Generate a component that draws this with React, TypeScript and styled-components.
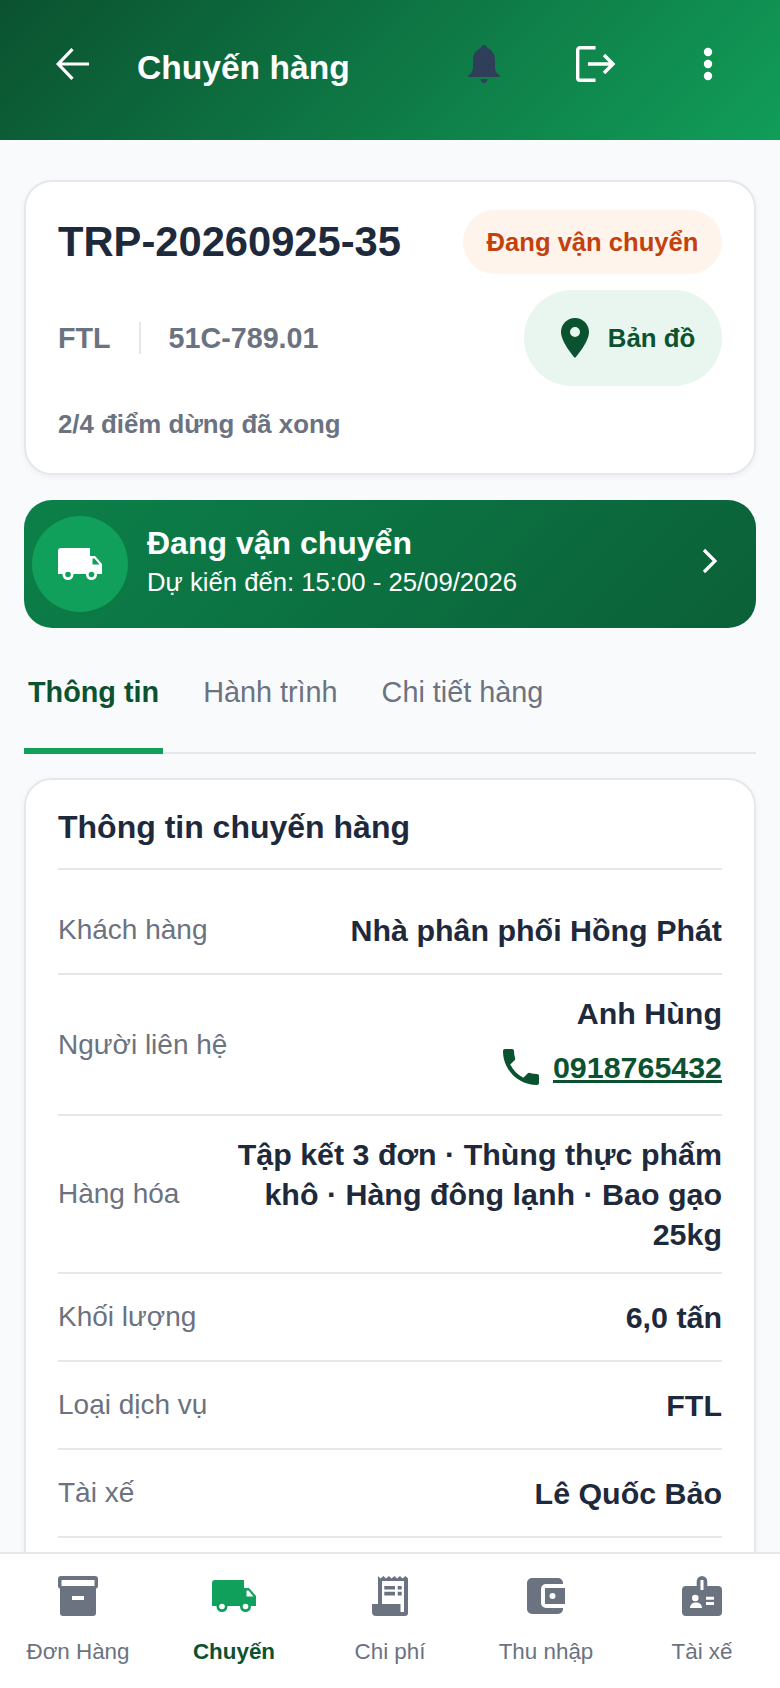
import styled, { createGlobalStyle } from 'styled-components';
import { MdLocationOn, MdPhone } from 'react-icons/md';

const GlobalStyle = createGlobalStyle`
  html, body {
    margin: 0;
    padding: 0;
    background: #f8fafc;
  }
  * {
    box-sizing: border-box;
  }
`;

const Screen = styled.div`
  width: 780px;
  height: 1688px;
  display: flex;
  flex-direction: column;
  overflow: hidden;
  background: #f8fafc;
  font-family: "Liberation Sans", Arial, sans-serif;
`;

const Header = styled.header`
  height: 140px;
  flex-shrink: 0;
  display: flex;
  align-items: center;
  padding: 0 16px 12px 56px;
  background: linear-gradient(135deg, #0b5230 0%, #119d59 100%);
`;

const Title = styled.h1`
  flex: 1;
  margin: 7px 0 0 48px;
  font-size: 33.6px;
  font-weight: 700;
  color: #fff;
`;

const HeaderActions = styled.div`
  display: flex;
  align-items: center;
`;

const HeaderButton = styled.div`
  width: 112px;
  display: flex;
  align-items: center;
  justify-content: center;
`;

const Body = styled.main`
  flex: 1;
  min-height: 0;
  overflow: hidden;
  padding: 40px 24px 0;
`;

const Card = styled.section`
  background: #fff;
  border: 2px solid #e5e7eb;
  border-radius: 28px;
  box-shadow: 0 2px 6px rgba(0, 0, 0, 0.05);
`;

const SummaryCard = styled(Card)`
  height: 295px;
  padding: 28px 32px 0;
`;

const SummaryTop = styled.div`
  display: flex;
  justify-content: space-between;
  align-items: center;
`;

const TripCode = styled.div`
  font-size: 41.7px;
  font-weight: 700;
  color: #1e293b;
`;

const StatusPill = styled.div`
  height: 64px;
  width: 259px;
  display: flex;
  align-items: center;
  justify-content: center;
  border-radius: 32px;
  background: #fff4ec;
  color: #c2410c;
  font-size: 25.6px;
  font-weight: 700;
`;

const SummaryMiddle = styled.div`
  margin-top: 16px;
  display: flex;
  justify-content: space-between;
  align-items: center;
`;

const Meta = styled.div`
  display: flex;
  align-items: center;
  font-size: 28.7px;
  font-weight: 700;
  color: #6b7280;
`;

const MetaDivider = styled.span`
  width: 2px;
  height: 32px;
  margin: 0 28px;
  background: #e5e7eb;
`;

const MapButton = styled.button`
  width: 198px;
  height: 96px;
  padding: 0;
  display: flex;
  align-items: center;
  justify-content: center;
  gap: 9px;
  border: 0;
  border-radius: 48px;
  background: #e8f6ef;
  color: #0b5230;
  font-family: inherit;
  font-size: 25.8px;
  font-weight: 700;
`;

const Progress = styled.div`
  margin-top: 24px;
  font-size: 25.8px;
  font-weight: 700;
  color: #6b7280;
`;

const Banner = styled.div`
  margin-top: 25px;
  height: 128px;
  display: flex;
  align-items: center;
  padding: 0 39px 0 8px;
  border-radius: 28px;
  background: linear-gradient(135deg, #0c8049 0%, #0b6038 100%);
  color: #fff;
`;

const BannerIcon = styled.div`
  width: 96px;
  height: 96px;
  display: flex;
  align-items: center;
  justify-content: center;
  border-radius: 50%;
  background: #11a05b;
  flex-shrink: 0;
`;

const BannerText = styled.div`
  flex: 1;
  margin: -3px 0 0 19px;
`;

const BannerTitle = styled.div`
  font-size: 32px;
  font-weight: 700;
  line-height: 40px;
`;

const BannerSub = styled.div`
  font-size: 25.7px;
  line-height: 39px;
`;

const BannerChevron = styled.div`
  display: flex;
  margin-bottom: 7px;
`;

const Tabs = styled.nav`
  margin-top: 24px;
  height: 102px;
  display: flex;
  gap: 36px;
  border-bottom: 2px solid #e5e7eb;
`;

const Tab = styled.div<{ $active?: boolean }>`
  height: 102px;
  padding: 24px 4px 0;
  font-size: 28.8px;
  font-weight: ${(p) => (p.$active ? 700 : 400)};
  color: ${(p) => (p.$active ? '#0b5230' : '#6b7280')};
  border-bottom: ${(p) => (p.$active ? '6px solid #11a05b' : '0')};
`;

const InfoCard = styled(Card)`
  margin-top: 24px;
  padding: 0 32px;
`;

const InfoTitle = styled.h2`
  margin: 0 0 17px;
  height: 90px;
  padding-top: 6px;
  display: flex;
  align-items: center;
  font-size: 32px;
  font-weight: 700;
  color: #1e293b;
  border-bottom: 2px solid #e5e7eb;
`;

const Row = styled.div`
  min-height: 88px;
  display: flex;
  justify-content: space-between;
  align-items: center;
  gap: 40px;
  padding: 18px 0;
  border-bottom: 2px solid #e5e7eb;
`;

const Label = styled.div`
  flex-shrink: 0;
  font-size: 28px;
  color: #6b7280;
`;

const Value = styled.div`
  text-align: right;
  font-size: 30.4px;
  line-height: 40px;
  font-weight: 700;
  color: #1e293b;
`;

const Phone = styled.div`
  margin: 10px 0 5px;
  display: flex;
  justify-content: flex-end;
  align-items: center;
  gap: 8px;
  color: #0b5230;
  text-decoration: underline;
`;

// the card runs on under the bottom bar
const CardTail = styled.div`
  height: 60px;
`;

const BottomNav = styled.nav`
  height: 136px;
  flex-shrink: 0;
  display: flex;
  justify-content: space-around;
  padding-top: 22px;
  background: #fff;
  border-top: 2px solid #e5e7eb;
`;

const NavItem = styled.div<{ $active?: boolean }>`
  width: 156px;
  display: flex;
  flex-direction: column;
  align-items: center;
  gap: 23px;
  font-size: 22.4px;
  line-height: 26px;
  font-weight: ${(p) => (p.$active ? 700 : 400)};
  color: ${(p) => (p.$active ? '#0b5230' : '#6b7280')};
`;

const NavIcon = styled.div`
  height: 40px;
  display: flex;
  align-items: center;
  justify-content: center;
`;

const BackIcon = () => (
  <svg width="33" height="32" viewBox="0 0 33 32" fill="none" stroke="#fff" strokeWidth="3.2" style={{ flexShrink: 0 }}>
    <path d="M33 16H3M16.5 1.2 2.2 16l14.3 14.8" />
  </svg>
);

const BellIcon = () => (
  <svg width="32" height="38" viewBox="0 0 32 38" fill="#2f3f5a">
    <path d="M16 0c1.6 0 2.7 1.2 3.2 3C24.400 5 27 9.500 27 15v8c0 3 2 5.500 5 7.500V32H0v-1.500c3-2 5-4.500 5-7.500v-8C5 9.500 7.600 5 12.800 3 13.300 1.200 14.400 0 16 0z" />
    <path d="M12.500 34h7c-.4 2.400-1.800 4-3.500 4s-3.100-1.600-3.500-4z" />
  </svg>
);

const LogoutIcon = () => (
  <svg width="40" height="36" viewBox="0 0 40 36" fill="none" stroke="#fff" strokeWidth="3.4">
    <path d="M19.500 1.700H4a2.300 2.300 0 0 0-2.300 2.300v28A2.300 2.300 0 0 0 4 34.300h15.500M12 18h25M28 9l9 9-9 9" />
  </svg>
);

const DotsIcon = () => (
  <svg width="10" height="34" viewBox="0 0 10 34" fill="#fff">
    <circle cx="5" cy="5" r="4.200" />
    <circle cx="5" cy="17" r="4.200" />
    <circle cx="5" cy="29" r="4.200" />
  </svg>
);

const TruckIcon = ({ color, hole }: { color: string; hole: string }) => (
  <svg width="44" height="32" viewBox="0 0 44 32">
    <path
      fill={color}
      fillRule="evenodd"
      d="M3 0h29v8h5l7 8v10H0V3a3 3 0 0 1 3-3zM34.500 10.500v6h7l-5-6z"
    />
    <circle cx="10" cy="26.500" r="5.500" fill={color} />
    <circle cx="10" cy="26.500" r="2.800" fill={hole} />
    <circle cx="33.500" cy="26.500" r="5.500" fill={color} />
    <circle cx="33.500" cy="26.500" r="2.800" fill={hole} />
  </svg>
);

const ChevronIcon = () => (
  <svg width="15" height="26" viewBox="0 0 15 26" fill="none" stroke="#fff" strokeWidth="3.200">
    <path d="M2 2l11 11L2 24" />
  </svg>
);

const ArchiveIcon = () => (
  <svg width="40" height="40" viewBox="0 0 40 40" fill="#6b7280">
    <path
      fillRule="evenodd"
      d="M3 0h34a3 3 0 0 1 3 3v7a3 3 0 0 1-2 2.800V37a3 3 0 0 1-3 3H5a3 3 0 0 1-3-3V12.800A3 3 0 0 1 0 10V3a3 3 0 0 1 3-3zm.500 4v6h33V4zM14 20v4h12v-4z"
    />
  </svg>
);

const ReceiptIcon = () => (
  <svg width="36" height="40" viewBox="0 0 36 40" fill="#6b7280">
    <path
      fillRule="evenodd"
      d="M6 0l2.500 2.500L11.500 0 14 2.500 17 0l2.500 2.500L22.500 0 25 2.500 28 0l2.500 2.500L33.500 0 36 2.500V37a3 3 0 0 1-3 3H4a4 4 0 0 1-4-4v-8h6zm4 5v23h18.500v8H32V5z"
    />
    <path d="M12.300 10H23v3.400H12.300zM12.300 15.800H23v3.800H12.300zM25.700 10h4v3.400h-4zM25.700 15.800h4v3.800h-4z" />
  </svg>
);

const WalletIcon = () => (
  <svg width="38" height="36" viewBox="0 0 38 36" fill="#6b7280">
    <path d="M5 0h26a5 5 0 0 1 5 5v1H19a5 5 0 0 0-5 5v14a5 5 0 0 0 5 5h17v1a5 5 0 0 1-5 5H5a5 5 0 0 1-5-5V5a5 5 0 0 1 5-5z" />
    <path fillRule="evenodd" d="M18 10h20v16H18zm7.500 5a3 3 0 1 0 0 6 3 3 0 0 0 0-6z" />
  </svg>
);

const BadgeIcon = () => (
  <svg width="40" height="40" viewBox="0 0 40 40" fill="#6b7280">
    <path
      fillRule="evenodd"
      d="M20 0a5.300 5.300 0 0 1 5.300 5.300V10H36a4 4 0 0 1 4 4v22a4 4 0 0 1-4 4H4a4 4 0 0 1-4-4V14a4 4 0 0 1 4-4h10.700V5.300A5.300 5.300 0 0 1 20 0zm-1.500 4v10h3V4zm-5.200 14.700a3.300 3.300 0 1 0 0 6.600 3.300 3.300 0 0 0 0-6.600zM8 32h12c0-3.500-2.500-5.500-6-5.500S8 28.500 8 32zm16-11.300v3h8v-3zm0 5.300v3h8v-3z"
    />
  </svg>
);

const lowerRows = [
  { label: 'Hàng hóa', value: 'Tập kết 3 đơn · Thùng thực phẩm khô · Hàng đông lạnh · Bao gạo 25kg' },
  { label: 'Khối lượng', value: '6,0 tấn' },
  { label: 'Loại dịch vụ', value: 'FTL' },
  { label: 'Tài xế', value: 'Lê Quốc Bảo' },
];

export default function App() {
  return (
    <Screen>
      <GlobalStyle />
      <Header>
        <BackIcon />
        <Title>Chuyến hàng</Title>
        <HeaderActions>
          <HeaderButton>
            <BellIcon />
          </HeaderButton>
          <HeaderButton>
            <LogoutIcon />
          </HeaderButton>
          <HeaderButton>
            <DotsIcon />
          </HeaderButton>
        </HeaderActions>
      </Header>
      <Body>
        <SummaryCard>
          <SummaryTop>
            <TripCode>TRP-20260925-35</TripCode>
            <StatusPill>Đang vận chuyển</StatusPill>
          </SummaryTop>
          <SummaryMiddle>
            <Meta>
              FTL
              <MetaDivider />
              51C-789.01
            </Meta>
            <MapButton>
              <MdLocationOn size={48} />
              Bản đồ
            </MapButton>
          </SummaryMiddle>
          <Progress>2/4 điểm dừng đã xong</Progress>
        </SummaryCard>

        <Banner>
          <BannerIcon>
            <TruckIcon color="#fff" hole="#11a05b" />
          </BannerIcon>
          <BannerText>
            <BannerTitle>Đang vận chuyển</BannerTitle>
            <BannerSub>Dự kiến đến: 15:00 - 25/09/2026</BannerSub>
          </BannerText>
          <BannerChevron>
            <ChevronIcon />
          </BannerChevron>
        </Banner>

        <Tabs>
          <Tab $active>Thông tin</Tab>
          <Tab>Hành trình</Tab>
          <Tab>Chi tiết hàng</Tab>
        </Tabs>

        <InfoCard>
          <InfoTitle>Thông tin chuyến hàng</InfoTitle>
          <Row>
            <Label>Khách hàng</Label>
            <Value>Nhà phân phối Hồng Phát</Value>
          </Row>
          <Row>
            <Label>Người liên hệ</Label>
            <Value>
              Anh Hùng
              <Phone>
                <MdPhone size={48} />
                0918765432
              </Phone>
            </Value>
          </Row>
          {lowerRows.map((row) => (
            <Row key={row.label}>
              <Label>{row.label}</Label>
              <Value>{row.value}</Value>
            </Row>
          ))}
          <CardTail />
        </InfoCard>
      </Body>
      <BottomNav>
        <NavItem>
          <NavIcon>
            <ArchiveIcon />
          </NavIcon>
          Đơn Hàng
        </NavItem>
        <NavItem $active>
          <NavIcon>
            <TruckIcon color="#11a05b" hole="#fff" />
          </NavIcon>
          Chuyến
        </NavItem>
        <NavItem>
          <NavIcon>
            <ReceiptIcon />
          </NavIcon>
          Chi phí
        </NavItem>
        <NavItem>
          <NavIcon>
            <WalletIcon />
          </NavIcon>
          Thu nhập
        </NavItem>
        <NavItem>
          <NavIcon>
            <BadgeIcon />
          </NavIcon>
          Tài xế
        </NavItem>
      </BottomNav>
    </Screen>
  );
}
